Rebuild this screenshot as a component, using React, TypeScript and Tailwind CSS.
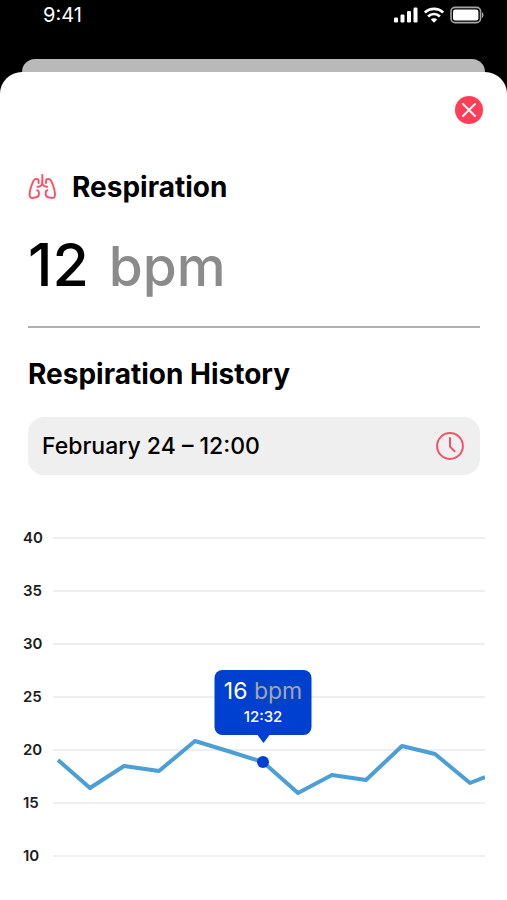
const SAMPLES = [
  [5, 248],
  [37, 276],
  [71, 254],
  [106, 259],
  [142, 229],
  [178, 240],
  [210, 250],
  [245, 281],
  [279, 263],
  [313, 268],
  [349, 234],
  [382, 242],
  [417, 271],
  [432, 265],
];

const TICKS = [40, 35, 30, 25, 20, 15, 10];

const PLOT_WIDTH = 432;
const PLOT_HEIGHT = 370;
const SELECTED = 6;

export default function App() {
  return (
    <div className="min-h-screen bg-black font-['Inter',sans-serif] text-black flex flex-col">
      <StatusBar />
      {/* edge of the screen behind the sheet */}
      <div className="mx-[22px] h-[13px] rounded-t-[13px] bg-[#b9b9b9]" />
      <main className="flex-1 rounded-t-[22px] bg-white pt-6 pb-4">
        <div className="flex justify-end pr-6">
          <button
            type="button"
            aria-label="Close"
            className="flex size-7 items-center justify-center rounded-full bg-[#ff3f58]"
          >
            <svg viewBox="0 0 14 14" className="size-3.5" fill="none" stroke="#fff" strokeWidth="1.8" strokeLinecap="round">
              <path d="M1 1l12 12M13 1L1 13" />
            </svg>
          </button>
        </div>

        <div className="pr-[27px] pl-7">
          <div className="mt-[45px] flex h-9 items-center gap-4">
            <LungsIcon />
            <h1 className="text-[28px] leading-9 font-bold">Respiration</h1>
          </div>
          <p className="mt-6 flex items-baseline gap-5 text-[59px] leading-[72px] font-medium">
            12 <span className="text-[55px] text-[#8b8b8b]">bpm</span>
          </p>
          <hr className="mt-6 border-t-2 border-[#b0b0b0]" />
          <h2 className="mt-7 text-[28px] leading-9 font-bold">Respiration History</h2>
          <button
            type="button"
            className="mt-[25px] flex h-[58px] w-full items-center justify-between rounded-2xl bg-[#efefef] pr-4 pl-3.5 text-[23px] font-medium"
          >
            February 24 – 12:00
            <ClockIcon />
          </button>
        </div>

        <RespirationChart />
      </main>
    </div>
  );
}

function StatusBar() {
  return (
    <header className="flex h-[59px] items-start justify-between pt-[3px] pr-[23px] pl-[43px] text-white">
      <span className="text-[20px] leading-6">9:41</span>
      <div className="flex h-6 items-center gap-1.5">
        <svg viewBox="0 0 24 16" className="h-4 w-6" fill="currentColor">
          <rect x="0" y="10.5" width="4" height="5" rx="1.2" />
          <rect x="6.5" y="7.5" width="4" height="8" rx="1.2" />
          <rect x="13" y="4" width="4" height="11.5" rx="1.2" />
          <rect x="19.5" y="0.5" width="4" height="15" rx="1.2" />
        </svg>
        <svg viewBox="0 0 20 16" className="h-4 w-5" fill="none" stroke="currentColor" strokeWidth="2.7">
          <path d="M0.9 5.6a13 13 0 0 1 18.2 0" />
          <path d="M4.1 9.5a8.2 8.2 0 0 1 11.8 0" />
          <path d="M10 15.7l-3.2-3.2a4.5 4.5 0 0 1 6.4 0z" fill="currentColor" stroke="none" />
        </svg>
        <svg viewBox="0 0 34 18" className="h-[18px] w-[34px]" fill="none">
          <rect x="1" y="1.4" width="29.6" height="15.2" rx="4" stroke="#a5a5a5" strokeWidth="1.6" />
          <rect x="3" y="3.5" width="25.4" height="11" rx="2.2" fill="#fff" />
          <path d="M32 6.2c2 .8 2 4.8 0 5.6z" fill="#a5a5a5" />
        </svg>
      </div>
    </header>
  );
}

function LungsIcon() {
  return (
    <svg
      viewBox="0 0 28 26"
      className="h-[26px] w-7"
      fill="none"
      stroke="#ff4d64"
      strokeWidth="1.9"
      strokeLinecap="round"
      strokeLinejoin="round"
    >
      <path d="M14.3 1v8.3c0 1.8-2.5 3.4-4.8 3.4" />
      <path d="M14.3 9.3c0 1.8 2.5 3.4 4.8 3.4" />
      <path d="M10.6 9V7.4c0-1.6-.9-2.5-2.3-2.5-1.5 0-2.4 1-3.2 2.8C3.2 12 1.6 17.5 1.6 20.8c0 2.3 1.2 3.4 3.3 3.1l3.3-.6c1.8-.4 2.7-1.4 2.7-3v-1.8c0-1.2-.6-2-1.7-2.2" />
      <path d="M18 9V7.4c0-1.6.9-2.5 2.3-2.5 1.5 0 2.4 1 3.2 2.8 1.9 4.3 3.5 9.8 3.5 13.1 0 2.3-1.2 3.4-3.3 3.1l-3.3-.6c-1.8-.4-2.7-1.4-2.7-3v-1.8c0-1.2.6-2 1.7-2.2" />
    </svg>
  );
}

function ClockIcon() {
  return (
    <svg viewBox="0 0 28 28" className="size-7" fill="none" stroke="#f4506a" strokeWidth="2" strokeLinecap="round" strokeLinejoin="round">
      <circle cx="14" cy="14" r="12.9" />
      <path d="M14 6v8.6l4.6 4.6" />
    </svg>
  );
}

function RespirationChart() {
  const [x, y] = SAMPLES[SELECTED];

  return (
    <section aria-label="Respiration chart" className="relative mt-[37px] mr-[22px] ml-[23px] h-[370px]">
      <div className="flex h-full flex-col">
        {TICKS.map((tick) => (
          <div key={tick} className="flex flex-1 items-center">
            <span className="w-[30px] text-[15px] leading-5 font-semibold text-[#1c1c1c]">{tick}</span>
            <div className="h-0.5 flex-1 bg-[#efefef]" />
          </div>
        ))}
      </div>

      <div className="absolute inset-y-0 right-0 left-[30px]">
        <svg
          viewBox={`0 0 ${PLOT_WIDTH} ${PLOT_HEIGHT}`}
          preserveAspectRatio="none"
          className="h-full w-full"
          fill="none"
          stroke="#4b9fd5"
          strokeWidth="4"
          strokeLinejoin="round"
        >
          <polyline points={SAMPLES.map((p) => p.join(',')).join(' ')} vectorEffect="non-scaling-stroke" />
        </svg>
        <div
          className="absolute flex -translate-x-1/2 -translate-y-full flex-col items-center"
          style={{ left: `${(x / PLOT_WIDTH) * 100}%`, top: y - 19 }}
        >
          <div className="flex h-[65px] w-[97px] flex-col items-center justify-center rounded-lg bg-[#0040d0] text-white">
            <p className="text-[23px] leading-7">
              16 <span className="text-[#a5a5ad]">bpm</span>
            </p>
            <p className="text-[15px] leading-6 font-medium">12:32</p>
          </div>
          <svg viewBox="0 0 12 8" className="h-2 w-3" fill="#0040d0">
            <path d="M0 0h12L6 8z" />
          </svg>
        </div>
        <span
          className="absolute size-3 -translate-x-1/2 -translate-y-1/2 rounded-full bg-[#0040d0]"
          style={{ left: `${(x / PLOT_WIDTH) * 100}%`, top: y }}
        />
      </div>
    </section>
  );
}
